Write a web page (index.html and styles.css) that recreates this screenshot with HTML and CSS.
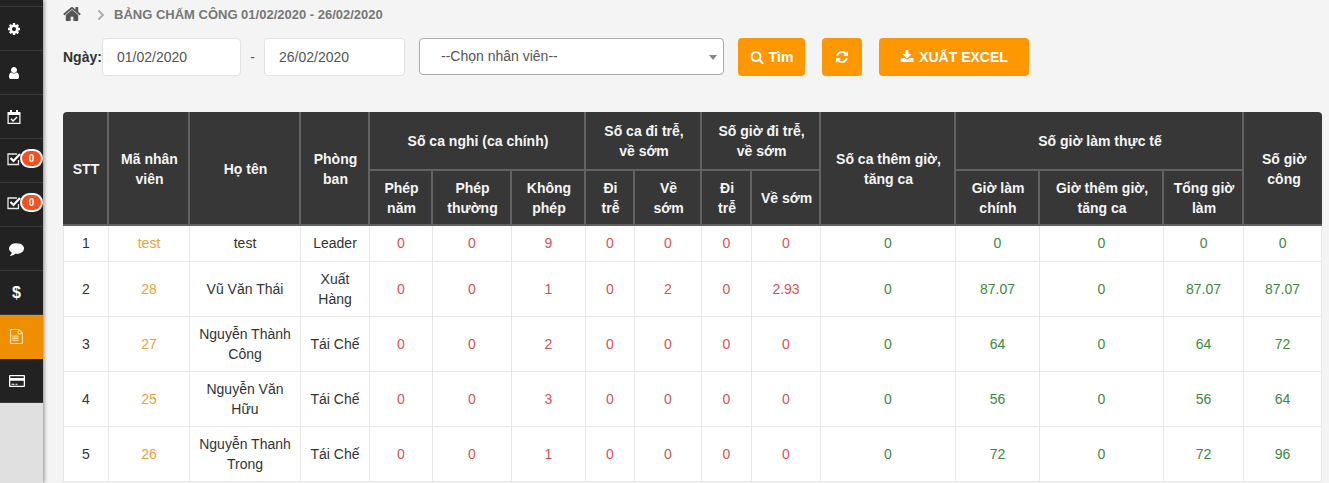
FILE: index.html
```html
<!DOCTYPE html>
<html lang="vi">
<head>
<meta charset="utf-8">
<title>Bảng chấm công</title>
<link rel="stylesheet" href="styles.css">
</head>
<body>
<div class="app">
  <nav class="sidebar">
    <div class="nav-top"></div>
    <a class="nav-item"><svg class="ic ic-cog" viewBox="0 0 1792 1792"><path d="M1152 896q0-106-75-181t-181-75-181 75-75 181 75 181 181 75 181-75 75-181zm512-109v222q0 12-8 23t-20 13l-185 28q-19 54-39 91 35 50 107 138 10 12 10 25t-9 23q-27 37-99 108t-94 71q-12 0-26-9l-138-108q-44 23-91 38-16 136-29 186-7 28-36 28H785q-14 0-24.500-8.500T749 1634l-28-184q-49-16-90-37l-141 107q-10 9-25 9-14 0-25-11-126-114-165-168-7-10-7-23 0-12 8-23 15-21 51-66.500t54-70.500q-27-50-41-99l-183-27q-13-2-21-12.500T128 1005V783q0-12 8-23t19-13l186-28q14-46 39-92-40-57-107-138-10-12-10-24 0-10 9-23 26-36 98.500-107.500T465 263q13 0 26 10l138 107q44-23 91-38 16-136 29-186 7-28 36-28h222q14 0 24.500 8.500T1043 158l28 184q49 16 90 37l142-107q9-9 24-9 13 0 25 10 129 119 165 170 7 8 7 22 0 12-8 23-15 21-51 66.500t-54 70.500q26 50 41 98l183 28q13 2 21 12.500t8 23.500z"/></svg></a>
    <a class="nav-item"><svg class="ic ic-user" viewBox="0 0 1792 1792"><path d="M1536 1399q0 109-62.500 187t-150.500 78H469q-88 0-150.500-78T256 1399q0-85 8.500-160.500t31.500-152 58.500-131 94-89T583 832q131 128 313 128t313-128q76 0 134.500 34.500t94 89 58.500 131 31.500 152 8.500 160.500zm-256-887q0 159-112.500 271.500T896 896 624.500 783.500 512 512t112.500-271.500T896 128t271.500 112.500T1280 512z"/></svg></a>
    <a class="nav-item"><svg class="ic ic-cal" viewBox="0 0 14 14"><path d="M3 0h2v2h4V0h2v2h2.500v12H.5V2H3z M1.700 5v7.800h10.600V5z" fill-rule="evenodd"/><path class="ck" d="M4 8.800l2.100 2.100L10 7"/></svg></a>
    <a class="nav-item nav-check"><svg class="ic ic-check" viewBox="0 0 14 14"><path class="box" d="M11.500 8v4.500h-10.500v-10.500h9"/><path class="ck2" d="M3.500 6l3 3 6.500-7"/></svg><span class="badge">0</span></a>
    <a class="nav-item nav-check"><svg class="ic ic-check" viewBox="0 0 14 14"><path class="box" d="M11.500 8v4.500h-10.500v-10.500h9"/><path class="ck2" d="M3.500 6l3 3 6.500-7"/></svg><span class="badge">0</span></a>
    <a class="nav-item nav-shift"><svg class="ic ic-comment" viewBox="0 0 1792 1792"><path d="M1792 896q0 174-120 321.500t-326 233-450 85.500q-70 0-145-8-198 175-460 242-49 14-114 22-17 2-30.500-9t-17.500-29v-1q-3-4-.5-12t2-10 4.500-9.500l6-9 7-8.500 8-9q7-8 31-34.500t34.500-38 31-39.500 32.500-51 27-59 26-76q-157-89-247.500-220T0 896q0-130 71-248.500T262 443t286-136.500T896 256q244 0 450 85.500t326 233T1792 896z"/></svg></a>
    <a class="nav-item nav-shift nav-dollar">$</a>
    <a class="nav-item nav-shift active"><svg class="ic ic-doc" viewBox="0 0 1792 1792"><path d="M1596 380q28 28 48 76t20 88v1152q0 40-28 68t-68 28H224q-40 0-68-28t-28-68V96q0-40 28-68t68-28h896q40 0 88 20t76 48zm-444-244v376h376q-10-29-22-41l-313-313q-12-12-41-22zm384 1528V640h-416q-40 0-68-28t-28-68V128H256v1536h1280zM384 800q0-14 9-23t23-9h704q14 0 23 9t9 23v64q0 14-9 23t-23 9H416q-14 0-23-9t-9-23v-64zm736 224q14 0 23 9t9 23v64q0 14-9 23t-23 9H416q-14 0-23-9t-9-23v-64q0-14 9-23t23-9h704zm0 256q14 0 23 9t9 23v64q0 14-9 23t-23 9H416q-14 0-23-9t-9-23v-64q0-14 9-23t23-9h704z"/></svg></a>
    <a class="nav-item nav-shift"><svg class="ic ic-card" viewBox="0 0 16 14"><path fill-rule="evenodd" d="M1 1h14a1 1 0 0 1 1 1v10a1 1 0 0 1-1 1H1a1 1 0 0 1-1-1V2a1 1 0 0 1 1-1z M1.300 2.200v1.900h13.400V2.200z M1.300 6.800v5h13.400v-5z M2.500 9.800h3v1h-3z M6.500 9.800h2v1h-2z"/></svg></a>
  </nav>
  <main class="main">
    <div class="breadcrumb">
      <svg class="home" viewBox="0 0 1664 1792"><path d="M1408 992v480q0 26-19 45t-45 19h-384v-384H704v384H320q-26 0-45-19t-19-45V992q0-1 .5-3t.5-3l575-474 575 474q1 2 1 6zm223-69l-62 74q-8 9-21 11h-3q-13 0-21-7L832 424 140 1001q-12 8-24 7-13-2-21-11l-62-74q-8-10-7-23.500t11-21.500l719-599q32-26 76-26t76 26l244 204V288q0-14 9-23t23-9h192q14 0 23 9t9 23v408l219 182q10 8 11 21.500t-7 23.500z"/></svg>
      <svg class="chev" viewBox="0 0 8 12"><path d="M1.500 1.500L6 6l-4.500 4.500"/></svg>
      <span class="crumb">BẢNG CHẤM CÔNG 01/02/2020 - 26/02/2020</span>
    </div>
    <div class="toolbar">
      <label class="date-label">Ngày:</label>
      <input class="date-input" type="text" value="01/02/2020">
      <span class="dash">-</span>
      <input class="date-input date-input-to" type="text" value="26/02/2020">
      <div class="select"><span>--Chọn nhân viên--</span><i class="caret"></i></div>
      <button class="btn btn-find"><svg class="btn-ic" viewBox="0 0 1792 1792"><path d="M1216 832q0-185-131.500-316.500T768 384 451.500 515.500 320 832t131.500 316.500T768 1280t316.500-131.500T1216 832zm512 832q0 52-38 90t-90 38q-54 0-90-38l-343-342q-179 124-399 124-143 0-273.500-55.500t-225-150-150-225T64 832t55.500-273.500 150-225 225-150T768 128t273.500 55.500 225 150 150 225T1472 832q0 220-124 399l343 343q37 37 37 90z"/></svg>Tìm</button>
      <button class="btn btn-refresh" aria-label="Làm mới"><svg class="btn-ic btn-ic-solo" viewBox="0 0 1792 1792"><path d="M1639 1056q0 5-1 7-64 268-268 434.500T892 1664q-146 0-282.500-55T366 1452l-129 129q-19 19-45 19t-45-19-19-45v-448q0-26 19-45t45-19h448q26 0 45 19t19 45-19 45l-137 137q71 66 161 102t187 36q134 0 250-65t186-179q11-17 53-117 8-23 30-23h192q13 0 22.500 9.500t9.500 22.500zm25-800v448q0 26-19 45t-45 19h-448q-26 0-45-19t-19-45 19-45l138-138q-148-137-349-137-134 0-250 65T460 628q-11 17-53 117-8 23-30 23H178q-13 0-22.500-9.500T146 736v-7q65-268 270-434.500T896 128q146 0 284 55.500T1425 340l130-129q19-19 45-19t45 19 19 45z"/></svg></button>
      <button class="btn btn-excel"><svg class="btn-ic" viewBox="0 0 1792 1792"><path d="M1344 1344q0-26-19-45t-45-19-45 19-19 45 19 45 45 19 45-19 19-45zm256 0q0-26-19-45t-45-19-45 19-19 45 19 45 45 19 45-19 19-45zm128-224v320q0 40-28 68t-68 28H160q-40 0-68-28t-28-68v-320q0-40 28-68t68-28h465l135 136q58 56 136 56t136-56l136-136h464q40 0 68 28t28 68zm-325-569q17 41-14 70l-448 448q-18 19-45 19t-45-19L403 621q-31-29-14-70 17-39 59-39h256V64q0-26 19-45t45-19h256q26 0 45 19t19 45v448h256q42 0 59 39z"/></svg>XUẤT EXCEL</button>
    </div>
    <table class="sheet">
      <colgroup>
        <col class="w46"><col class="w81"><col class="w111"><col class="w69"><col class="w63"><col class="w79"><col class="w74"><col class="w49"><col class="w67"><col class="w50"><col class="w69"><col class="w135"><col class="w84"><col class="w124"><col class="w80"><col class="w78">
      </colgroup>
      <thead>
        <tr class="head-1">
          <th rowspan="2">STT</th>
          <th rowspan="2">Mã nhân viên</th>
          <th rowspan="2">Họ tên</th>
          <th rowspan="2">Phòng ban</th>
          <th colspan="3">Số ca nghỉ (ca chính)</th>
          <th colspan="2">Số ca đi trễ,<br>về sớm</th>
          <th colspan="2">Số giờ đi trễ,<br>về sớm</th>
          <th rowspan="2">Số ca thêm giờ, tăng ca</th>
          <th colspan="3">Số giờ làm thực tế</th>
          <th rowspan="2">Số giờ công</th>
        </tr>
        <tr class="head-2">
          <th>Phép năm</th><th>Phép thường</th><th>Không phép</th>
          <th>Đi<br>trễ</th><th>Về<br>sớm</th>
          <th>Đi<br>trễ</th><th>Về sớm</th>
          <th>Giờ làm chính</th><th>Giờ thêm giờ, tăng ca</th><th>Tổng giờ làm</th>
        </tr>
      </thead>
      <tbody>
        <tr class="row-short">
          <td>1</td><td class="code">test</td><td>test</td><td>Leader</td>
          <td class="r">0</td><td class="r">0</td><td class="r">9</td><td class="r">0</td><td class="r">0</td><td class="r">0</td><td class="r">0</td>
          <td class="g">0</td><td class="g">0</td><td class="g">0</td><td class="g">0</td><td class="g">0</td>
        </tr>
        <tr>
          <td>2</td><td class="code">28</td><td>Vũ Văn Thái</td><td>Xuất Hàng</td>
          <td class="r">0</td><td class="r">0</td><td class="r">1</td><td class="r">0</td><td class="r">2</td><td class="r">0</td><td class="r">2.93</td>
          <td class="g">0</td><td class="g">87.07</td><td class="g">0</td><td class="g">87.07</td><td class="g">87.07</td>
        </tr>
        <tr>
          <td>3</td><td class="code">27</td><td>Nguyễn Thành Công</td><td>Tái Chế</td>
          <td class="r">0</td><td class="r">0</td><td class="r">2</td><td class="r">0</td><td class="r">0</td><td class="r">0</td><td class="r">0</td>
          <td class="g">0</td><td class="g">64</td><td class="g">0</td><td class="g">64</td><td class="g">72</td>
        </tr>
        <tr>
          <td>4</td><td class="code">25</td><td>Nguyễn Văn Hữu</td><td>Tái Chế</td>
          <td class="r">0</td><td class="r">0</td><td class="r">3</td><td class="r">0</td><td class="r">0</td><td class="r">0</td><td class="r">0</td>
          <td class="g">0</td><td class="g">56</td><td class="g">0</td><td class="g">56</td><td class="g">64</td>
        </tr>
        <tr>
          <td>5</td><td class="code">26</td><td>Nguyễn Thanh Trong</td><td>Tái Chế</td>
          <td class="r">0</td><td class="r">0</td><td class="r">1</td><td class="r">0</td><td class="r">0</td><td class="r">0</td><td class="r">0</td>
          <td class="g">0</td><td class="g">72</td><td class="g">0</td><td class="g">72</td><td class="g">96</td>
        </tr>
      </tbody>
    </table>
  </main>
</div>
</body>
</html>
```
FILE: styles.css
```css
* { box-sizing: border-box; }
html, body { height: 100%; margin: 0; overflow: hidden; }
body { font-family: "Liberation Sans", Arial, sans-serif; font-size: 14px; color: #333; background: #f4f4f4; }

.app { display: flex; height: 100%; }

.sidebar {
  flex: 0 0 43px;
  display: flex;
  flex-direction: column;
  background: #e0e0e0;
  box-shadow: 1px 0 4px rgba(0, 0, 0, .45);
  position: relative;
  z-index: 2;
}
.nav-top { height: 7px; flex: none; background: #222; border-bottom: 1px solid #3a3a3a; }
.nav-item {
  position: relative;
  flex: none;
  height: 44px;
  display: flex;
  align-items: center;
  padding-left: 7px;
  background: #222;
  border-bottom: 1px solid #3a3a3a;
  color: #fff;
}
.nav-shift { padding-left: 9px; }
.active { background: #ef8f00; border-bottom-color: #ef8f00; color: #ffe7c4; }
.ic { display: block; fill: currentColor; }
.ic-cog { width: 14px; height: 14px; }
.ic-user { width: 14px; height: 14px; }
.ic-cal { width: 14px; height: 14px; }
.ic-cal .ck { fill: none; stroke: currentColor; stroke-width: 1.400; }
.ic-check { width: 14px; height: 14px; margin-top: -3px; }
.box { fill: none; stroke: #e8e8e8; stroke-width: 1.300; }
.ck2 { fill: none; stroke: #fff; stroke-width: 2.200; }
.ic-comment { width: 15px; height: 15px; }
.ic-doc { width: 15px; height: 15px; }
.ic-card { width: 16px; height: 14px; }
.nav-dollar { font-size: 16px; font-weight: 700; padding-left: 12px; }
.nav-check .badge {
  position: absolute;
  left: 20px;
  top: 10px;
  width: 23px;
  height: 19px;
  border-radius: 10px;
  border: 2px solid #fff;
  background: #f4511e;
  color: #fff;
  font-size: 10px;
  font-weight: 700;
  line-height: 15px;
  text-align: center;
}

.main { flex: 1; min-width: 0; padding: 0 7px 0 20px; }

.breadcrumb { display: flex; align-items: center; height: 29px; }
.home { width: 18px; height: 20px; fill: #555; margin-top: -2px; }
.chev { width: 8px; height: 12px; margin-left: 16px; fill: none; stroke: #aaa; stroke-width: 1.800; }
.crumb { margin-left: 9px; font-size: 13px; font-weight: 700; color: #777; }

.toolbar { display: flex; align-items: flex-start; margin-top: 9px; height: 74px; }
.date-label { font-weight: 700; line-height: 38px; width: 39px; white-space: nowrap; flex: none; color: #333; }
.date-input {
  width: 139px;
  height: 38px;
  border: 1px solid #e2e2e2;
  border-radius: 4px;
  background: #fff;
  padding: 0 14px;
  font: 14px "Liberation Sans", Arial, sans-serif;
  color: #555;
  outline: none;
}
.date-input-to { width: 141px; }
.dash { width: 23px; line-height: 38px; text-align: center; color: #555; flex: none; }
.select {
  position: relative;
  width: 305px;
  height: 37px;
  margin-left: 14px;
  border: 1px solid #aaa;
  border-radius: 4px;
  background: #fff;
  padding-left: 21px;
  line-height: 34px;
  color: #555;
}
.caret {
  position: absolute;
  right: 6px;
  top: 16px;
  border-left: 4px solid transparent;
  border-right: 4px solid transparent;
  border-top: 5px solid #888;
}
.btn {
  height: 38px;
  border: 0;
  border-radius: 4px;
  background: #ff9800;
  color: #fff;
  font: 700 14px "Liberation Sans", Arial, sans-serif;
  display: flex;
  align-items: center;
  justify-content: center;
  padding: 0;
  flex: none;
}
.btn-ic { width: 14px; height: 14px; fill: #fff; margin-right: 5px; }
.btn-ic-solo { margin-right: 0; }
.btn-find { width: 67px; margin-left: 14px; }
.btn-refresh { width: 40px; margin-left: 17px; }
.btn-excel { width: 150px; margin-left: 17px; }

.sheet {
  width: 1259px;
  table-layout: fixed;
  border-collapse: separate;
  border-spacing: 0;
  background: #fff;
}
.w46 { width: 46px; } .w81 { width: 81px; } .w111 { width: 111px; } .w69 { width: 69px; }
.w63 { width: 63px; } .w79 { width: 79px; } .w74 { width: 74px; } .w49 { width: 49px; }
.w67 { width: 67px; } .w50 { width: 50px; } .w135 { width: 135px; } .w84 { width: 84px; }
.w124 { width: 124px; } .w80 { width: 80px; } .w78 { width: 78px; }

.sheet th {
  background: #373737;
  color: #f5f5f5;
  font-weight: 700;
  line-height: 20px;
  text-align: center;
  vertical-align: middle;
  border-right: 2px solid #626262;
  border-bottom: 2px solid #626262;
}
.head-1 { height: 59px; }
.head-2 { height: 55px; }
.head-1 th { padding: 8px 6px 7px 8px; }
.head-1 th[rowspan] { padding: 9px 6px 7px 8px; }
.head-2 th { padding: 6px 6px 6px 8px; }
.head-1 th:last-child { border-right: 0; border-top-right-radius: 4px; }
.head-1 th:first-child { border-top-left-radius: 4px; }
.sheet td {
  padding: 7px 8px;
  line-height: 20px;
  text-align: center;
  vertical-align: middle;
  border-right: 1px solid #e7e7e7;
  border-bottom: 1px solid #e7e7e7;
}
.row-short { height: 36px; }
.row-short td { padding: 7px 8px 8px; }
.sheet td:first-child { border-left: 1px solid #e7e7e7; }
.code { color: #f0a03c; }
.r { color: #d9534f; }
.g { color: #3a8a3f; }
```
